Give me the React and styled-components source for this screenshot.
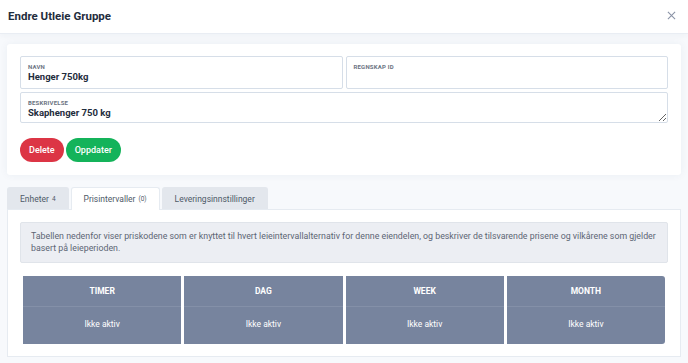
import React from "react";
import styled, { createGlobalStyle } from "styled-components";

const GlobalStyle = createGlobalStyle`
  * { box-sizing: border-box; }
  body {
    margin: 0;
    background: #f7f9fc;
    font-family: Roboto, "Noto Sans", sans-serif;
    color: #1f2d3d;
  }
`;

const intervals = ["TIMER", "DAG", "WEEK", "MONTH"];

function App() {
  return (
    <>
      <GlobalStyle />
      <Header>
        <Title>Endre Utleie Gruppe</Title>
        <Close aria-label="Lukk">
          <svg width="9" height="9" viewBox="0 0 10 10">
            <path d="M1 1 L9 9 M9 1 L1 9" stroke="#8a93a6" strokeWidth="1.2" />
          </svg>
        </Close>
      </Header>
      <Body>
        <Card>
          <FieldRow>
            <Field>
              <Label>Navn</Label>
              <Value>Henger 750kg</Value>
            </Field>
            <Field>
              <Label>Regnskap ID</Label>
              <Value />
            </Field>
          </FieldRow>
          <Field $resizable>
            <Label>Beskrivelse</Label>
            <Value>Skaphenger 750 kg</Value>
          </Field>
          <Buttons>
            <Button $color="#dc3545">Delete</Button>
            <Button $color="#14b35a">Oppdater</Button>
          </Buttons>
        </Card>

        <Tabs>
          <Tab>
            Enheter <Count>4</Count>
          </Tab>
          <Tab $active>
            Prisintervaller <Count>(0)</Count>
          </Tab>
          <Tab>Leveringsinnstillinger</Tab>
        </Tabs>
        <Panel>
          <Info>
            Tabellen nedenfor viser priskodene som er knyttet til hvert leieintervallalternativ for denne
            eiendelen, og beskriver de tilsvarende prisene og vilkårene som gjelder basert på leieperioden.
          </Info>
          <Grid>
            {intervals.map((name) => (
              <Column key={name}>
                <ColHead>{name}</ColHead>
                <ColValue>Ikke aktiv</ColValue>
              </Column>
            ))}
          </Grid>
        </Panel>
      </Body>
    </>
  );
}
export default App;

const Header = styled.div`
  height: 34px;
  background: #fff;
  border-bottom: 1px solid #e9edf3;
  box-shadow: 0 2px 6px rgba(30, 45, 70, 0.04);
  display: flex;
  align-items: center;
  justify-content: space-between;
  padding: 0 8px 2px 8px;
`;

const Title = styled.h1`
  margin: 0;
  font-size: 11.5px;
  font-weight: 700;
  color: #1f2d3d;
`;

const Close = styled.button`
  border: 0;
  background: none;
  padding: 0;
  margin-right: 4px;
  display: flex;
`;

const Body = styled.div`
  padding: 10px 7px 0 7px;
`;

const Card = styled.div`
  background: #fff;
  border-radius: 3px;
  box-shadow: 0 0 8px rgba(40, 60, 100, 0.06);
  padding: 12px 13px 13px 13px;
  display: flex;
  flex-direction: column;
  gap: 3px;
  height: 131px;
`;

const FieldRow = styled.div`
  display: grid;
  grid-template-columns: 1fr 1fr;
  gap: 3px;
`;

const Field = styled.div`
  border: 1px solid #d6dee8;
  border-radius: 2px;
  height: 33px;
  padding: 6px 7px 0 7px;
  ${(p) => p.$resizable && "resize: vertical; overflow: auto;"}
`;

const Label = styled.div`
  font-size: 6px;
  font-weight: 700;
  text-transform: uppercase;
  letter-spacing: 0.2px;
  color: #6c7482;
  line-height: 8px;
`;

const Value = styled.div`
  font-size: 9.5px;
  font-weight: 700;
  color: #1f2d3d;
  line-height: 12px;
  min-height: 12px;
`;

const Buttons = styled.div`
  display: flex;
  gap: 2px;
  margin-top: 12px;
`;

const Button = styled.button`
  border: 0;
  border-radius: 12px;
  height: 24px;
  padding: 0 9px;
  background: ${(p) => p.$color};
  color: #fff;
  font-family: inherit;
  font-size: 9px;
  font-weight: 500;
`;

const Tabs = styled.div`
  display: flex;
  gap: 2px;
  margin-top: 12px;
  align-items: flex-end;
`;

const Tab = styled.div`
  height: 22px;
  padding: 0 12px;
  display: flex;
  align-items: center;
  gap: 3px;
  font-size: 8.5px;
  color: #4f5a68;
  border-radius: 3px 3px 0 0;
  background: ${(p) => (p.$active ? "#fff" : "#e3e7ed")};
  border: 1px solid ${(p) => (p.$active ? "#e6ebf1" : "#e3e7ed")};
  border-bottom: 0;
  ${(p) => p.$active && "margin-bottom: -1px; height: 23px; position: relative;"}
`;

const Count = styled.span`
  font-size: 6.5px;
`;

const Panel = styled.div`
  background: #fff;
  border: 1px solid #e6ebf1;
  padding: 12px 12px 12px 12px;
  height: 148px;
`;

const Info = styled.div`
  background: #eceef3;
  border: 1px solid #e0e4ea;
  border-radius: 2px;
  padding: 7px 10px 7px 10px;
  font-size: 8.8px;
  line-height: 12px;
  color: #5c6573;
  height: 41px;
`;

const Grid = styled.div`
  display: grid;
  grid-template-columns: repeat(4, 1fr);
  gap: 3px;
  margin: 13px 3px 0 3px;
`;

const Column = styled.div`
  background: #77849e;
  color: #fff;
  text-align: center;
  font-size: 8.5px;
  &:last-child {
    border-radius: 0 3px 3px 0;
  }
`;

const ColHead = styled.div`
  height: 31px;
  line-height: 31px;
  font-weight: 700;
  border-bottom: 1px solid #8490a8;
`;

const ColValue = styled.div`
  height: 37px;
  line-height: 35px;
`;
